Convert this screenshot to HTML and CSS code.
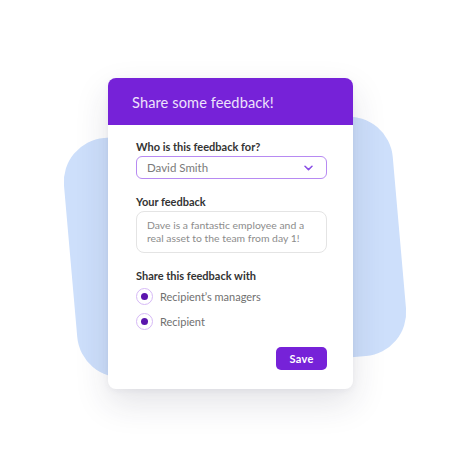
FILE: index.html
```html
<!DOCTYPE html>
<html>
<head>
<meta charset="utf-8">
<link rel="stylesheet" href="styles.css">
</head>
<body>
<div class="stage">
  <div class="blob"></div>
  <div class="card">
    <div class="card-header">Share some feedback!</div>
    <div class="card-body">
      <div class="label">Who is this feedback for?</div>
      <div class="select">
        <span>David Smith</span>
        <svg class="chev" width="9" height="6" viewBox="0 0 9 6"><path d="M1 1.2 L4.5 4.6 L8 1.2" fill="none" stroke="#8a4ee6" stroke-width="1.5" stroke-linecap="round" stroke-linejoin="round"/></svg>
      </div>
      <div class="label label-gap">Your feedback</div>
      <div class="textarea">Dave is a fantastic employee and a real asset to the team from day 1!</div>
      <div class="label label-gap">Share this feedback with</div>
      <div class="radios">
        <div class="radio-row"><span class="radio"><span class="dot"></span></span><span>Recipient’s managers</span></div>
        <div class="radio-row"><span class="radio"><span class="dot"></span></span><span>Recipient</span></div>
      </div>
      <div class="actions"><button class="save">Save</button></div>
    </div>
  </div>
</div>
</body>
</html>
```

FILE: styles.css
```css
html, body {
  margin: 0;
  padding: 0;
  background: #ffffff;
}
body {
  font-family: "Lato", "Open Sans", sans-serif;
}
.stage {
  position: relative;
  width: 468px;
  height: 468px;
  overflow: hidden;
  padding: 78px 0 0 108px;
  box-sizing: border-box;
}
.blob {
  position: absolute;
  left: 70px;
  top: 127px;
  width: 330px;
  height: 240px;
  border-radius: 44px;
  background: #cddffb;
  transform: rotate(-5deg);
}
.card {
  position: relative;
  width: 245px;
  height: 311px;
  background: #ffffff;
  border-radius: 8px;
  overflow: hidden;
  box-shadow: 0 14px 34px rgba(40, 40, 70, 0.13), 0 2px 6px rgba(40, 40, 70, 0.05);
}
.card-header {
  height: 47px;
  background: #7622d8;
  color: #eee2fc;
  font-size: 14.6px;
  letter-spacing: 0.1px;
  display: flex;
  align-items: center;
  padding-left: 24px;
  padding-top: 2px;
  box-sizing: border-box;
}
.card-body {
  padding: 15px 26px 0 28px;
  display: flex;
  flex-direction: column;
}
.label {
  font-size: 11px;
  font-weight: 700;
  color: #333333;
  line-height: 14px;
  margin-bottom: 2px;
}
.label-gap {
  margin-top: 16px;
}
.select {
  height: 23px;
  border: 1.5px solid #b78af2;
  border-radius: 6px;
  box-sizing: border-box;
  display: flex;
  align-items: center;
  justify-content: space-between;
  padding: 0 13px 0 10px;
  font-size: 11.5px;
  color: #7a7a7a;
}
.textarea {
  height: 42px;
  border: 1px solid #e4e4e4;
  border-radius: 8px;
  box-sizing: border-box;
  padding: 7px 8px 0 10px;
  font-size: 10.4px;
  line-height: 13px;
  color: #8c8c8c;
}
.radios {
  display: flex;
  flex-direction: column;
  gap: 5px;
  margin-top: 1px;
}
.radio-row {
  display: flex;
  align-items: center;
  gap: 7px;
  height: 20px;
  font-size: 11px;
  color: #707070;
}
.radio {
  width: 17px;
  height: 17px;
  border: 1px solid #d6b9f6;
  border-radius: 50%;
  box-sizing: border-box;
  display: flex;
  align-items: center;
  justify-content: center;
}
.dot {
  width: 7px;
  height: 7px;
  border-radius: 50%;
  background: #5b16ad;
}
.actions {
  display: flex;
  justify-content: flex-end;
  margin-top: 16px;
}
.save {
  width: 51px;
  height: 23px;
  border: none;
  border-radius: 5px;
  background: #7622d8;
  color: #ffffff;
  font-family: "Lato", "Open Sans", sans-serif;
  font-size: 11px;
  font-weight: 700;
  letter-spacing: 0.3px;
  padding: 0;
}
```
